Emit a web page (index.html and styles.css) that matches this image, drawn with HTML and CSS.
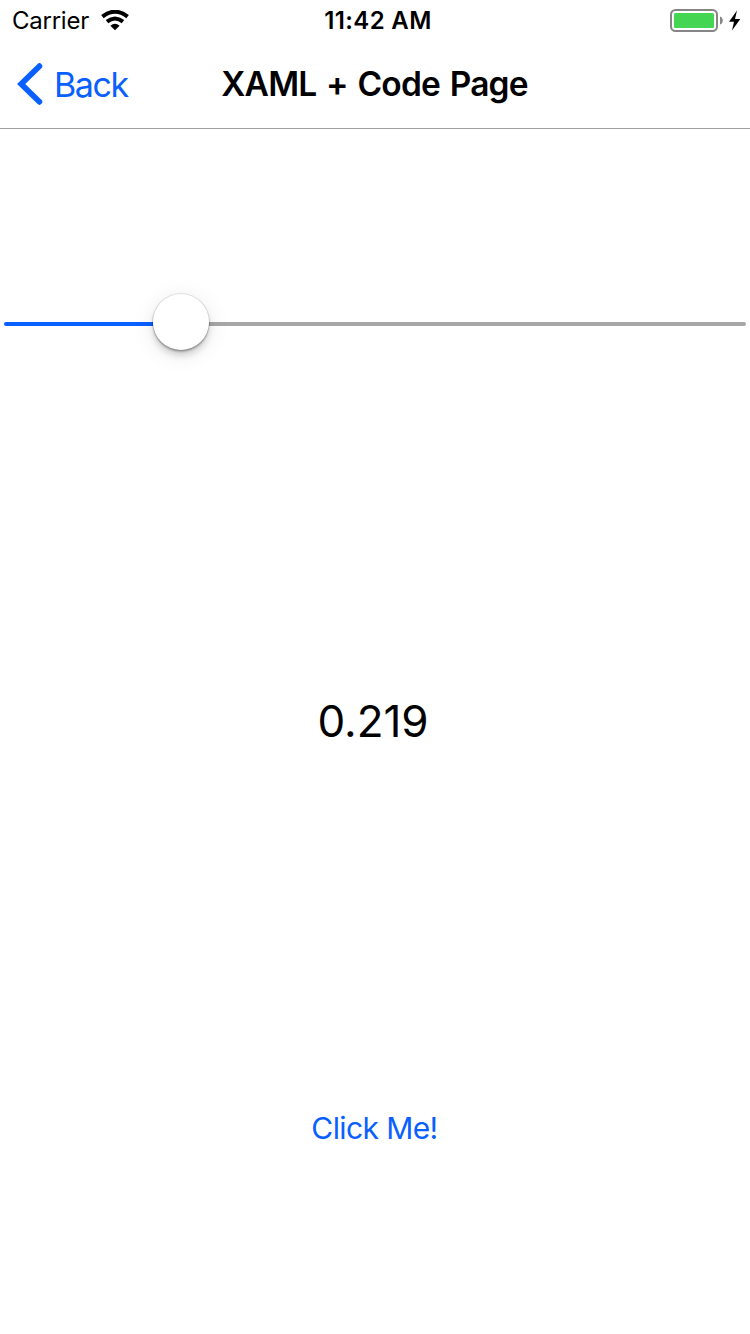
FILE: index.html
```html
<!DOCTYPE html>
<html lang="en">
<head>
<meta charset="utf-8">
<title>XAML + Code Page</title>
<link rel="stylesheet" href="styles.css">
</head>
<body>
<div class="status-bar">
  <div class="network">
    <span class="carrier">Carrier</span>
    <svg class="wifi" width="28" height="21" viewBox="0 0 28 21">
      <path d="M1.4 6.6Q14-3.1 26.6 6.6M6 11.7Q14 5.3 22 11.7" fill="none" stroke="#000" stroke-width="4.1"/>
      <path d="M9.4 15.8Q14 11.8 18.6 15.8L14 20.3Z"/>
    </svg>
  </div>
  <span class="clock">11:42 AM</span>
  <div class="power">
    <svg width="71" height="24" viewBox="0 0 71 24">
      <rect x="1" y="2" width="46" height="21" rx="4.5" fill="#fff" stroke="#868686" stroke-width="2"/>
      <rect x="4" y="5" width="40" height="15" rx="1.5" fill="#44d653"/>
      <path d="M50 8.5C53.7 9.5 53.7 15.5 50 16.5Z" fill="#868686"/>
      <path d="M67 2.5L59 13.8H64L62 22.5L70.3 11H65Z"/>
    </svg>
  </div>
</div>
<header class="nav-bar">
  <a class="back">
    <svg width="26" height="42" viewBox="0 0 26 42"><path d="M22.4 3.2L4.2 21L22.4 38.8" fill="none" stroke="#0a60ff" stroke-width="5.8" stroke-linecap="round" stroke-linejoin="miter"/></svg>
    <span class="back-label">Back</span>
  </a>
  <h1 class="title">XAML + Code Page</h1>
</header>
<main class="content">
  <section class="slider-row">
    <div class="slider">
      <div class="track-filled"></div>
      <div class="thumb"></div>
      <div class="track-rest"></div>
    </div>
  </section>
  <section class="value-row"><span class="value">0.219</span></section>
  <section class="button-row"><a class="button">Click Me!</a></section>
</main>
</body>
</html>
```
FILE: styles.css
```css
* { box-sizing: border-box; }
body {
  margin: 0;
  width: 750px;
  height: 1334px;
  display: flex;
  flex-direction: column;
  overflow: hidden;
  background: #fff;
  color: #000;
  font-family: Inter, "Liberation Sans", sans-serif;
  white-space: nowrap;
}
svg { display: block; flex: none; }
.status-bar {
  height: 40px;
  display: grid;
  grid-template-columns: 1fr auto 1fr;
  align-items: center;
  padding: 0 9px 0 12px;
  font-size: 24px;
  line-height: 38px;
}
.network { display: flex; align-items: center; gap: 12px; }
.carrier { letter-spacing: -0.25px; padding-top: 2px; }
.clock { font-weight: 600; letter-spacing: 0.35px; padding: 2px 0 0 3px; }
.power { display: flex; justify-content: flex-end; }
.nav-bar {
  height: 89px;
  display: grid;
  grid-template-columns: 1fr auto 1fr;
  align-items: center;
  border-bottom: 1px solid #a0a0a0;
  padding: 0 17px;
}
.back {
  display: flex;
  align-items: center;
  gap: 11px;
  color: #0a60ff;
  font-size: 34px;
}
.back-label { letter-spacing: -1.4px; padding-top: 1px; }
.title {
  margin: 0;
  padding-right: 1px;
  font-size: 33.5px;
  font-weight: 600;
  letter-spacing: -0.8px;
  word-spacing: 2px;
}
.content {
  flex: 1;
  display: grid;
  grid-template-rows: 386px 412px 1fr;
}
.slider-row { display: flex; align-items: center; padding: 0 4px; }
.slider { flex: 1; display: flex; align-items: center; }
.track-filled, .track-rest { height: 4px; margin-top: 4px; }
.track-filled { width: 149px; background: #0a60ff; border-radius: 2px 0 0 2px; }
.track-rest { flex: 1; background: #a7a7a7; border-radius: 0 2px 2px 0; }
.thumb {
  position: relative;
  width: 56px;
  height: 56px;
  border-radius: 50%;
  background: #fff;
  box-shadow: 0 0 0 1px rgba(0,0,0,.09), 0 2px 2px rgba(0,0,0,.25), 0 6px 6px rgba(0,0,0,.13), 0 4px 22px rgba(0,0,0,.1);
}
.value-row, .button-row { display: flex; align-items: center; justify-content: center; }
.value { font-size: 44px; letter-spacing: -0.1px; padding-right: 4px; }
.button { font-size: 30px; letter-spacing: -0.6px; color: #0a60ff; padding: 0 1px 6px 0; }
```
